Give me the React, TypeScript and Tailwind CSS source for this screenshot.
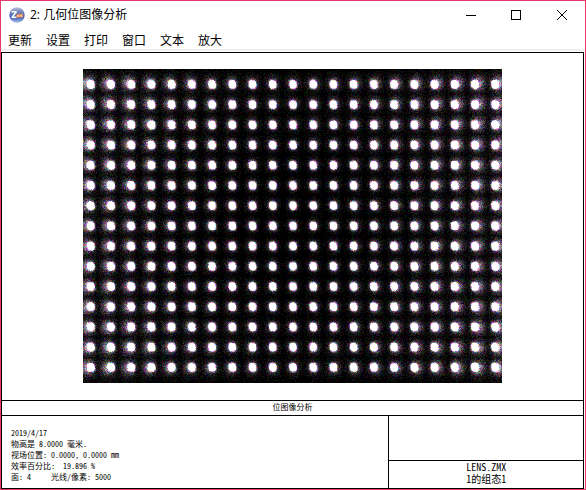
import React, { useMemo } from "react";

const W = 419;
const H = 314;

function createRandom(seed: number) {
  let s = seed;
  return () => {
    s = (s + 0x6d2b79f5) | 0;
    let t = Math.imul(s ^ (s >>> 15), 1 | s);
    t = (t + Math.imul(t ^ (t >>> 7), 61 | t)) ^ t;
    return ((t ^ (t >>> 14)) >>> 0) / 4294967296;
  };
}

const LEVELS = [0, 24, 48, 80, 120, 170, 215, 255];

function quantize(v: number) {
  let best = 0;
  for (let i = 1; i < LEVELS.length; i++) {
    if (Math.abs(LEVELS[i] - v) < Math.abs(LEVELS[best] - v)) best = i;
  }
  return LEVELS[best];
}

/** Traces a 21 x 15 field of spots; the flare of each grows toward the edge of the field. */
function traceSpots() {
  const random = createRandom(5000);
  const gauss = () => random() + random() + random() + random() - 2;
  const runs = new Map<string, string[]>();
  for (let y = 0; y < H; y++) {
    let start = 0;
    let previous = "";
    for (let x = 0; x <= W; x++) {
      let color = "end";
      if (x < W) {
        // Cells are shifted outward so that a flare is not cut where two cells meet.
        const side = (x - W / 2) / (W / 2);
        const col = Math.min(20, Math.max(0, Math.round((x - 7.5 - side * 3) / 20.2)));
        const row = Math.min(14, Math.max(0, Math.round((y - 14.5) / 20.2)));
        const fx = (col - 10) / 10;
        const fy = (row - 7) / 7;
        const dx = x - 7.5 - col * 20.2;
        const dy = y - 15 - row * 20.2;
        const skew = dx - dy * 0.08;
        const core = Math.pow(Math.abs(skew) / 3.8, 2.6) + Math.pow(Math.abs(dy) / 4.4, 2.6);
        const hx = dx - fx * 3.4;
        const hy = dy - fy * 0.8 + 0.3;
        const spread = 24 + 12 * (fx * fx) + 5 * fy * fy;
        const halo = (70 + 65 * Math.abs(fx) + 15 * Math.abs(fy)) * Math.exp(-(hx * hx + hy * hy) / spread);
        const base = 5 + 16 * fx * fx + 7 * fy * fy;
        const light = 560 * Math.exp(-Math.pow(core, 1.3) * 1.6) + halo + base * Math.exp(-(hx * hx + hy * hy * 0.6) / 110);
        const noise = 3 + 6 * fx * fx + 2 * fy * fy + Math.sqrt(light) * 3.8;
        const shared = gauss() * noise * 0.35;
        const channel = (tint: number) => quantize(light * tint + shared + gauss() * noise);
        color = `rgb(${channel(1.04)},${channel(0.9)},${channel(1.06)})`;
      }
      if (color !== previous) {
        if (previous && previous !== "rgb(0,0,0)") {
          const list = runs.get(previous) ?? [];
          list.push(`M${start} ${y}h${x - start}v1h${start - x}z`);
          runs.set(previous, list);
        }
        start = x;
        previous = color;
      }
    }
  }
  return Array.from(runs, ([fill, list]) => ({ fill, d: list.join("") }));
}

function SpotImage() {
  const layers = useMemo(traceSpots, []);
  return (
    <svg width={W} height={H} viewBox={`0 0 ${W} ${H}`} shapeRendering="crispEdges" className="shrink-0 bg-black" role="img" aria-label="几何位图像">
      {layers.map((layer) => (
        <path key={layer.fill} fill={layer.fill} d={layer.d} />
      ))}
    </svg>
  );
}

function AppIcon() {
  return (
    <svg width="16" height="16" viewBox="0 0 16 16" aria-hidden="true">
      <defs>
        <linearGradient id="ball" x1="0" y1="0" x2="0" y2="1">
          <stop offset="0" stopColor="#b9c0d8" />
          <stop offset="0.3" stopColor="#7384bd" />
          <stop offset="0.65" stopColor="#3f5fb4" />
          <stop offset="1" stopColor="#a9c2ef" />
        </linearGradient>
      </defs>
      <circle cx="8" cy="8" r="7.7" fill="url(#ball)" />
      <path d="M2.500 4.800h5M7.500 4.800L3 10.200M2.500 10.200h5" fill="none" stroke="#fff" strokeWidth="1.500" />
      <path d="M7.500 7.200L14 6.500v4H7z" fill="#e98b52" />
      <path d="M8.500 10l.5-2 1.500 1.500L12 8l1 2" fill="none" stroke="#ffe2c8" strokeWidth="0.8" />
    </svg>
  );
}

const menu = ["更新", "设置", "打印", "窗口", "文本", "放大"];
const details = [
  "2019/4/17",
  "物高是 8.0000 毫米.",
  "视场位置: 0.0000, 0.0000 mm",
  "效率百分比:  19.896 %",
  "面: 4     光线/像素: 5000",
];

export default function App() {
  return (
    <main className="flex min-h-screen flex-col border border-[#e8396b] bg-white font-['Liberation_Sans','Noto_Sans_CJK_SC',sans-serif] text-xs text-black">
      <header className="flex h-7 items-center pl-2">
        <AppIcon />
        <h1 className="ml-[5px] flex-1 font-['Open_Sans','Noto_Sans_CJK_SC',sans-serif] text-xs">2: 几何位图像分析</h1>
        <button aria-label="最小化" className="flex h-7 w-[45px] items-center justify-center">
          <svg width="10" height="10" shapeRendering="crispEdges"><path d="M0 5.500h10" stroke="#000" /></svg>
        </button>
        <button aria-label="最大化" className="flex h-7 w-[45px] items-center justify-center">
          <svg width="10" height="10" shapeRendering="crispEdges"><path d="M.5.5h9v9h-9z" fill="none" stroke="#000" /></svg>
        </button>
        <button aria-label="关闭" className="flex h-7 w-[47px] items-center justify-center">
          <svg width="10" height="10"><path d="M0 0l10 10M10 0L0 10" stroke="#000" /></svg>
        </button>
      </header>
      <nav className="flex items-center gap-3.5 border-b-2 border-[#f0f0f0] pt-1 pl-[7px]">
        {menu.map((item) => (
          <button key={item} className="leading-4">{item}</button>
        ))}
      </nav>
      <section className="mt-px mr-px flex flex-1 flex-col border border-black">
        <div className="flex flex-1 items-start justify-center py-4">
          <SpotImage />
        </div>
        <h2 className="h-4 border-y border-black text-center font-['Noto_Sans_Mono_CJK_SC','Noto_Sans_CJK_SC',monospace] text-[8px] leading-3">位图像分析</h2>
        <div className="grid grid-cols-[2fr_1fr] font-['Noto_Sans_Mono_CJK_SC','Noto_Sans_CJK_SC',monospace]">
          <div className="border-r border-black pt-[11px] pb-1.5 pl-[9px] text-[8px] leading-[11px] whitespace-pre">
            {details.map((line) => (
              <p key={line}>{line}</p>
            ))}
          </div>
          <div className="flex flex-col">
            <div className="flex-1 border-b border-black" />
            <p className="pb-[3px] text-center text-[10px] leading-3">
              LENS.ZMX
              <br />
              1的组态1
            </p>
          </div>
        </div>
      </section>
    </main>
  );
}
